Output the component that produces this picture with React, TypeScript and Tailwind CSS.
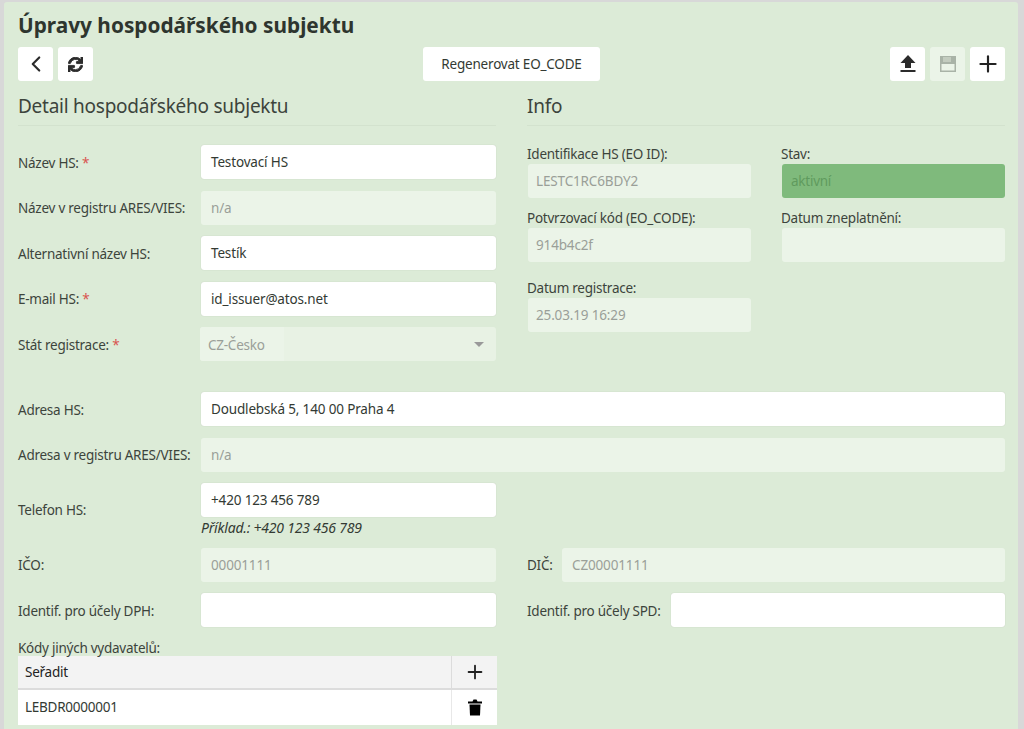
import React from "react";
import { ChevronLeft, Plus } from "lucide-react";
import { FaSync } from "react-icons/fa";

const Req = () => <span className="text-[#d9534f]"> *</span>;

function Input({ value = "", disabled = false, className = "" }: { value?: string; disabled?: boolean; className?: string }) {
  return (
    <div
      className={`h-[34px] flex items-center pl-[10px] pt-[1px] rounded-[3px] text-[13.5px] tracking-[-0.15px] ${disabled ? "bg-[#ebf4e8] text-[#9a9f98]" : "bg-white text-[#333a33] shadow-[0_0_1px_rgba(0,0,0,0.2)]"} ${className}`}
    >
      {value}
    </div>
  );
}

function Row({ label, req, value, disabled }: { label: string; req?: boolean; value?: string; disabled?: boolean }) {
  return (
    <div className="flex items-center">
      <div className="w-[183px] shrink-0 whitespace-nowrap pt-[2px]">
        {label}
        {req && <Req />}
      </div>
      <Input value={value} disabled={disabled} className="flex-1" />
    </div>
  );
}

function IconBtn({ children, disabled }: { children: React.ReactNode; disabled?: boolean }) {
  return (
    <div className={`w-[35px] h-[34px] rounded-[3px] flex items-center justify-center ${disabled ? "bg-[#ebf4e8]" : "bg-white"}`}>
      {children}
    </div>
  );
}

function Heading({ children }: { children: React.ReactNode }) {
  return (
    <div className="h-[45px] border-b border-[#d3e2ce] flex items-center text-[19px] text-[#3c443c] pt-[6px]">
      <span>{children}</span>
    </div>
  );
}

function Labeled({ label, value, className = "", inputClass = "" }: { label: string; value?: string; className?: string; inputClass?: string }) {
  return (
    <div className={className}>
      <div className="h-[20px] leading-[21px] whitespace-nowrap">{label}</div>
      <Input value={value} disabled className={inputClass} />
    </div>
  );
}

export default function App() {
  return (
    <div className="h-[729px] overflow-hidden bg-[#d8d8d8] pt-[2px] pl-[4px] pr-[6px]" style={{ fontFamily: '"Noto Sans", "Open Sans", sans-serif' }}>
      <div className="h-[760px] bg-[#dcebd7] rounded-[3px] pl-[14px] pr-[13px] text-[13.5px] tracking-[-0.25px] text-[#3c443c]">
        <div className="pt-[10px] h-[45px] text-[20.8px] tracking-normal leading-[26px] font-bold text-[#2e352e]">Úpravy hospodářského subjektu</div>

        <div className="flex items-center">
          <div className="flex gap-[5px] w-[140px]">
            <IconBtn><ChevronLeft size={26} strokeWidth={2} className="text-[#2b2b2b]" /></IconBtn>
            <IconBtn><FaSync size={15} stroke="currentColor" strokeWidth={30} className="text-[#2b2b2b]" /></IconBtn>
          </div>
          <div className="h-[34px] w-[177px] ml-[265px] bg-white rounded-[3px] flex items-center justify-center text-[#333a33] tracking-[-0.2px]">Regenerovat EO_CODE</div>
          <div className="flex gap-[5px] ml-auto">
            <IconBtn>
              <svg width="16" height="18" viewBox="0 0 16 18" fill="#2b2b2b"><path d="M8 0 L15.5 8 H11 V13 H5 V8 H0.5 Z" /><rect x="0.5" y="15" width="15" height="2" /></svg>
            </IconBtn>
            <IconBtn disabled>
              <svg width="16" height="16" viewBox="0 0 16 16"><path d="M0 0H16V16H0Z" fill="#a9b3a7" /><rect x="3" y="1" width="8" height="5" fill="#c3ccbf" /><rect x="1.5" y="8" width="13" height="6.5" fill="#ebf4e8" /></svg>
            </IconBtn>
            <IconBtn><Plus size={26} strokeWidth={2} className="text-[#222]" /></IconBtn>
          </div>
        </div>

        <div className="grid grid-cols-[478px_478px] gap-x-[31px]">
          <div>
            <Heading>Detail hospodářského subjektu</Heading>
            <div className="mt-[19px] flex flex-col gap-[11.5px]">
              <Row label="Název HS:" req value="Testovací HS" />
              <Row label="Název v registru ARES/VIES:" value="n/a" disabled />
              <Row label="Alternativní název HS:" value="Testík" />
              <Row label="E-mail HS:" req value="id_issuer@atos.net" />
              <div className="flex items-center">
                <div className="w-[182px] shrink-0 pt-[2px]">Stát registrace:<Req /></div>
                <div className="flex-1 h-[34px] bg-[#e8f2e4] rounded-[3px] flex items-center justify-between pr-[12px]">
                  <div className="h-[34px] w-[84px] bg-[#ebf4e8] rounded-l-[3px] flex items-center pl-[8px] pt-[2px] text-[#9a9f98]">CZ-Česko</div>
                  <div className="w-0 h-0 border-x-[5px] border-x-transparent border-t-[5px] border-t-[#999]" />
                </div>
              </div>
            </div>
          </div>
          <div>
            <Heading>Info</Heading>
            <div className="mt-[18px] grid grid-cols-[224px_224px] gap-x-[30px] gap-y-[10px] w-[478px]">
              <Labeled label="Identifikace HS (EO ID):" value="LESTC1RC6BDY2" inputClass="ml-[1px] !pl-[8px]" />
              <div>
                <div className="h-[20px] leading-[21px]">Stav:</div>
                <div className="h-[34px] ml-[1px] bg-[#7fba7c] rounded-[3px] flex items-center pl-[9px] pt-[1px] text-[#5f9a5e]">aktivní</div>
              </div>
              <Labeled label="Potvrzovací kód (EO_CODE):" value="914b4c2f" inputClass="ml-[1px] !pl-[8px]" />
              <Labeled label="Datum zneplatnění:" inputClass="ml-[1px]" />
              <Labeled label="Datum registrace:" value="25.03.19 16:29" className="mt-[6px]" inputClass="ml-[1px] !pl-[8px]" />
            </div>
          </div>
        </div>

        <div className="mt-[31px] flex flex-col gap-[11.5px]">
          <Row label="Adresa HS:" value="Doudlebská 5, 140 00 Praha 4" />
          <Row label="Adresa v registru ARES/VIES:" value="n/a" disabled />
          <div className="flex items-center w-[478px]">
            <div className="w-[183px] shrink-0 pt-[2px]">Telefon HS:</div>
            <div className="flex-1">
              <Input value="+420 123 456 789" />
              <div className="h-[19px] leading-[21px] text-[14px] tracking-[-0.2px] italic text-[#333a33]">Příklad.: +420 123 456 789</div>
            </div>
          </div>
          <div className="grid grid-cols-[478px_478px] gap-x-[31px]">
            <Row label="IČO:" value="00001111" disabled />
            <div className="flex items-center">
              <div className="w-[35px] shrink-0 pt-[2px]">DIČ:</div>
              <Input value="CZ00001111" disabled className="flex-1" />
            </div>
          </div>
          <div className="grid grid-cols-[478px_478px] gap-x-[31px]">
            <Row label="Identif. pro účely DPH:" />
            <div className="flex items-center">
              <div className="w-[144px] shrink-0 whitespace-nowrap pt-[2px]">Identif. pro účely SPD:</div>
              <Input className="flex-1" />
            </div>
          </div>
        </div>

        <div className="mt-[12px] h-[17px] leading-[19px]">Kódy jiných vydavatelů:</div>
        <div className="w-[479px]">
          <div className="flex h-[34px] bg-[#f3f3f3] border-b-2 border-[#dcdcdc]">
            <div className="flex-1 flex items-center pl-[7px] text-[#222]">Seřadit</div>
            <div className="w-[46px] border-l border-[#dcdcdc] flex items-center justify-center"><Plus size={22} strokeWidth={2} className="text-[#222]" /></div>
          </div>
          <div className="flex h-[35px] bg-white">
            <div className="flex-1 flex items-center pl-[7px] text-[#333a33]">LEBDR0000001</div>
            <div className="w-[46px] border-l border-[#e8e8e8] flex items-center justify-center">
              <svg width="14" height="17" viewBox="0 0 14 17" fill="#000"><path d="M0 2.5H4.5L5.5 0.5H8.5L9.5 2.5H14V4.5H0Z" /><path d="M1.5 5.5H12.5L12 16.5H2Z" /></svg>
            </div>
          </div>
        </div>
      </div>
    </div>
  );
}
